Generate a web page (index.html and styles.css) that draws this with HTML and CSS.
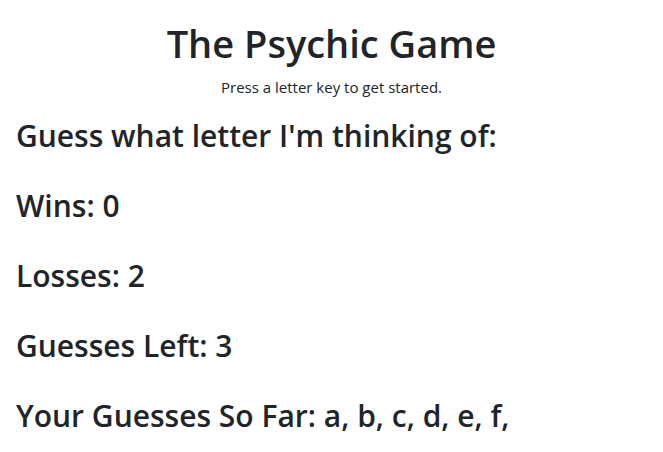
FILE: index.html
```html
<!DOCTYPE html>
<html>
<head>
<meta charset="utf-8">
<link rel="stylesheet" href="styles.css">
</head>
<body>
<main class="game">
  <header class="intro">
    <h1 class="title">The Psychic Game</h1>
    <p class="subtitle">Press a letter key to get started.</p>
  </header>
  <section class="stats">
    <h3 class="stat">Guess what letter I'm thinking of:</h3>
    <h3 class="stat">Wins: 0</h3>
    <h3 class="stat">Losses: 2</h3>
    <h3 class="stat">Guesses Left: 3</h3>
    <h3 class="stat">Your Guesses So Far: a, b, c, d, e, f,</h3>
  </section>
</main>
</body>
</html>
```
FILE: styles.css
```css
* { box-sizing: border-box; }
body {
  margin: 0;
  font-family: "Open Sans", "Noto Sans", sans-serif;
  color: #212529;
  background: #fff;
}
.game {
  padding: 0 16px;
}
.intro {
  display: flex;
  flex-direction: column;
  align-items: center;
  padding-top: 21px;
}
.title {
  margin: 0;
  font-size: 38px;
  font-weight: 600;
  line-height: 1.2;
}
.subtitle {
  margin: 9px 0 0;
  font-size: 15px;
  line-height: 1.5;
}
.stats {
  display: flex;
  flex-direction: column;
  gap: 34px;
  margin-top: 20px;
}
.stat {
  margin: 0;
  font-size: 30px;
  font-weight: 600;
  line-height: 1.2;
}
```
